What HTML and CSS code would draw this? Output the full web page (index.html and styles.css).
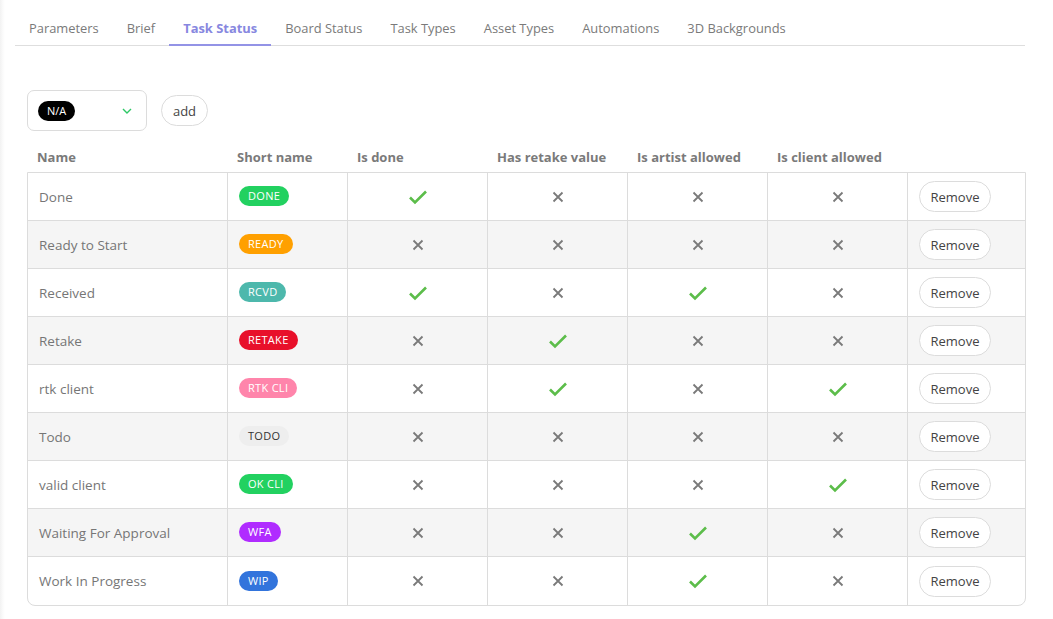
FILE: index.html
```html
<!DOCTYPE html>
<html>
<head>
<meta charset="utf-8">
<link rel="stylesheet" href="styles.css">
</head>
<body>
<div class="page">
  <nav class="tabs">
    <div class="tab">Parameters</div>
    <div class="tab">Brief</div>
    <div class="tab active">Task Status</div>
    <div class="tab">Board Status</div>
    <div class="tab">Task Types</div>
    <div class="tab">Asset Types</div>
    <div class="tab">Automations</div>
    <div class="tab">3D Backgrounds</div>
  </nav>
  <main class="content">
    <div class="toolbar">
      <div class="select">
        <span class="na">N/A</span>
        <svg class="chev" width="10" height="6" viewBox="0 0 10 6"><path d="M1 1 L5 5 L9 1" fill="none" stroke="#2ec866" stroke-width="1.4"/></svg>
      </div>
      <button class="btn add">add</button>
    </div>
    <div class="grid head">
      <div class="hc">Name</div>
      <div class="hc">Short name</div>
      <div class="hc">Is done</div>
      <div class="hc">Has retake value</div>
      <div class="hc">Is artist allowed</div>
      <div class="hc">Is client allowed</div>
      <div class="hc"></div>
    </div>
    <div class="tbl" id="tbl"></div>
  </main>
</div>
<script>
  var rows = [
    ["Done","DONE","#22d160","#fff",1,0,0,0],
    ["Ready to Start","READY","#ffa000","#fff",0,0,0,0],
    ["Received","RCVD","#4db8ac","#fff",1,0,1,0],
    ["Retake","RETAKE","#e8102a","#fff",0,1,0,0],
    ["rtk client","RTK CLI","#ff85ab","#fff",0,1,0,1],
    ["Todo","TODO","#eeeeee","#333",0,0,0,0],
    ["valid client","OK CLI","#22d160","#fff",0,0,0,1],
    ["Waiting For Approval","WFA","#b02cff","#fff",0,0,1,0],
    ["Work In Progress","WIP","#3274dc","#fff",0,0,1,0]
  ];
  var check = '<svg width="20" height="16" viewBox="0 0 20 16"><path d="M2 8.5 L7 13.5 L18 2.5" fill="none" stroke="#5cbd4a" stroke-width="2.6"/></svg>';
  var cross = '<svg width="12" height="12" viewBox="0 0 12 12"><path d="M1.5 1.5 L10.5 10.5 M10.5 1.5 L1.5 10.5" fill="none" stroke="#7a7a7a" stroke-width="1.8"/></svg>';
  var html = "";
  rows.forEach(function(r, i){
    html += '<div class="grid row' + (i % 2 ? ' alt' : '') + (i === rows.length - 1 ? ' last' : '') + '">';
    html += '<div class="c name">' + r[0] + '</div>';
    html += '<div class="c"><span class="badge" style="background:' + r[2] + ';color:' + r[3] + '">' + r[1] + '</span></div>';
    for (var k = 4; k < 8; k++) html += '<div class="c ic">' + (r[k] ? check : cross) + '</div>';
    html += '<div class="c"><button class="btn rm">Remove</button></div>';
    html += '</div>';
  });
  document.getElementById("tbl").innerHTML = html;
</script>
</body>
</html>
```
FILE: styles.css
```css
* { box-sizing: border-box; }
html, body { margin: 0; padding: 0; }
body {
  font-family: "Open Sans", "Noto Sans", sans-serif;
  background: linear-gradient(to right, #f2f2f2 0, #fbfbfb 3px, #fff 5px);
  width: 1053px;
  height: 619px;
  overflow: hidden;
}
.page { padding-left: 15px; }
.tabs {
  display: flex;
  width: 1010px;
  border-bottom: 1px solid #dedede;
  height: 46px;
}
.tab {
  padding: 18px 14px 0;
  height: 45px;
  font-size: 12.9px;
  line-height: 20px;
  color: #7a7a7a;
}
.tab.active {
  color: #8787e0;
  font-weight: 700;
  border-bottom: 2px solid #9393e6;
  height: 46px;
}
.content { padding: 44px 0 0 12px; }
.toolbar { display: flex; align-items: center; gap: 14px; }
.select {
  width: 120px;
  height: 41px;
  border: 1px solid #dcdcdc;
  border-radius: 7px;
  display: flex;
  align-items: center;
  justify-content: space-between;
  padding: 0 14px 0 10px;
}
.na {
  background: #000;
  color: #fff;
  font-size: 11px;
  line-height: 20px;
  height: 20px;
  padding: 0 9px;
  border-radius: 10px;
}
.chev { margin-top: 1px; }
.btn {
  font-family: inherit;
  background: #fff;
  border: 1px solid #dcdcdc;
  border-radius: 16px;
  color: #444;
  font-size: 13px;
  cursor: pointer;
}
.add { height: 31px; width: 47px; padding: 0; }
.grid {
  display: grid;
  grid-template-columns: 200px 120px 140px 140px 140px 140px 1fr;
  width: 999px;
}
.head { margin-top: 11px; height: 30px; align-items: center; }
.hc {
  padding-left: 10px;
  font-size: 13px;
  font-weight: 700;
  color: #7a7a7a;
}
.tbl {
  width: 999px;
  border: 1px solid #dcdcdc;
  border-radius: 0 0 8px 8px;
  overflow: hidden;
}
.tbl .grid { width: 997px; grid-template-columns: 200px 120px 140px 140px 140px 140px 1fr; }
.row { height: 48px; }
.row .c {
  border-right: 1px solid #dcdcdc;
  border-bottom: 1px solid #dcdcdc;
  display: flex;
  align-items: center;
  padding-left: 11px;
}
.row .c:last-child { border-right: none; }
.row.last .c { border-bottom: none; }
.row.alt { background: #f5f5f5; }
.name { font-size: 13.5px; color: #767676; padding-left: 11px; }
.badge {
  display: inline-block;
  height: 20px;
  line-height: 20px;
  padding: 0 9px;
  border-radius: 10px;
  font-size: 11px;
  font-weight: 500;
  letter-spacing: 0.3px;
  margin-top: -1px;
}
.row .ic { justify-content: center; padding-left: 0; }
.rm { width: 72px; height: 31px; padding: 0; }
```
